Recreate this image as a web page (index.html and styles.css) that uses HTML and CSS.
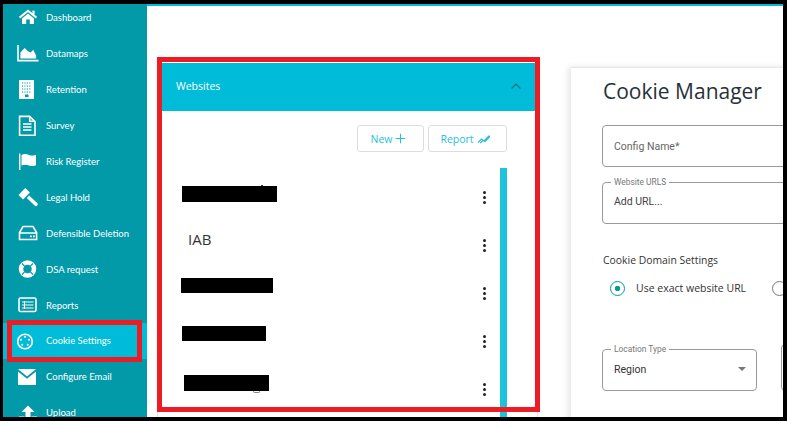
FILE: index.html
```html
<!DOCTYPE html>
<html lang="en">
<head>
<meta charset="utf-8">
<title>Cookie Settings</title>
<link rel="stylesheet" href="styles.css">
</head>
<body>
<div class="app">
  <nav class="sidebar">
    <a class="nav-item"><svg class="nav-icon" viewBox="0 0 22 22"><path class="fill" d="M5 11.500 11 6.600l6 4.900V17h-4.200v-4.600H9.200V17H5z"/><path class="line thick" d="M2.600 10.600 11 3.800l8.400 6.800"/><path class="fill" d="M15.400 3.600h2.200v4h-2.200z"/></svg><span>Dashboard</span></a>
    <a class="nav-item"><svg class="nav-icon" viewBox="0 0 22 22"><path class="line" d="M1 2v15.600h20.500"/><path class="fill" d="M3.400 15.400V9.600L7.600 5l3.400 3.200 2.600 1.400 2.600-2.800 2.900 5.600v3z"/></svg><span>Datamaps</span></a>
    <a class="nav-item"><svg class="nav-icon" viewBox="0 0 22 22"><path class="fill" d="M2 1h15v19H2z"/><path class="dots" d="M5 4h9M5 7h9M5 10h9M5 13h9"/><path class="cut" d="M8 15.500h3.500V18H8z"/></svg><span>Retention</span></a>
    <a class="nav-item"><svg class="nav-icon" viewBox="0 0 22 22"><path class="line" d="M2.600 1.400h10l5.400 5.200v13.600H2.600z"/><path class="fill" d="M12 1.400h1.500v4.100h4.500V7h-6z"/><path class="line" d="M6 9h8.500M6 12h8.500M6 15h8.500"/></svg><span>Survey</span></a>
    <a class="nav-item"><svg class="nav-icon" viewBox="0 0 22 22"><path class="fill" d="M2 2.500h1.400V19H2z"/><path class="fill" d="M4.500 4c3-1.600 5.500-.8 7.500 0 2.500 1 4.500.6 7-.3v10.500c-2.500 1-5 1.200-7 .3-2.400-1-4.500-1.300-7.500 0z"/></svg><span>Risk Register</span></a>
    <a class="nav-item"><svg class="nav-icon" viewBox="0 0 22 22"><path class="fill" d="m1.500 9 6.800-7 4.600 4.600-6.800 7z"/><path class="fill" d="m9.800 12 2.400-2.400 8 7.300a1.800 1.800 0 0 1-2.600 2.600z"/></svg><span>Legal Hold</span></a>
    <a class="nav-item"><svg class="nav-icon" viewBox="0 0 22 22"><path class="line" d="M6 4.500h10l3.600 6v7H2.500v-7zM2.500 11h17"/><path class="fill" d="M13 13.500h1.800v1.800H13zM16 13.500h1.800v1.800H16z"/></svg><span>Defensible Deletion</span></a>
    <a class="nav-item"><svg class="nav-icon" viewBox="0 0 22 22"><circle class="ring" cx="10.500" cy="11" r="6.500"/><path class="spoke" d="m5 5.500 2.600 2.600M16 5.500l-2.600 2.600M5 16.500l2.600-2.600M16 16.500l-2.600-2.600"/></svg><span>DSA request</span></a>
    <a class="nav-item"><svg class="nav-icon" viewBox="0 0 22 22"><rect class="line" x="2" y="4" width="17" height="13.500" rx="1.500"/><path class="line thin" d="M5 8h11.500M5 11h11.500M5 14h11.500M7.500 7v8"/></svg><span>Reports</span></a>
    <a class="nav-item active"><svg class="nav-icon" viewBox="0 0 22 22"><circle class="line" cx="8" cy="11.500" r="7.300"/><circle class="fill" cx="8" cy="6.800" r="1"/><circle class="fill" cx="4" cy="9.800" r="1"/><circle class="fill" cx="12" cy="9.800" r="1"/><circle class="fill" cx="5.200" cy="14.800" r="1"/><circle class="fill" cx="10.800" cy="14.800" r="1"/></svg><span>Cookie Settings</span></a>
    <a class="nav-item"><svg class="nav-icon" viewBox="0 0 22 22"><path class="fill" d="M1 3h18L10 10.400z"/><path class="fill" d="M1 5.400 10 12.800l9-7.400V19H1z"/></svg><span>Configure Email</span></a>
    <a class="nav-item"><svg class="nav-icon" viewBox="0 0 22 22"><path class="fill" d="M11 3.500 17.500 10h-4v5.500h-5V10h-4z"/><path class="fill" d="M2 14.500h5.500v2.500h7v-2.500H20V21H2z"/></svg><span>Upload</span></a>
  </nav>
  <main class="content">
    <section class="websites">
      <header class="panel-head"><span>Websites</span><svg class="chevron" viewBox="0 0 12 8"><path d="m1.500 6.500 4.500-4.500 4.500 4.500"/></svg></header>
      <div class="actions">
        <button class="btn new">New <svg class="btn-icon" viewBox="0 0 12 12"><path d="M6 .8v10.400M.8 6h10.400"/></svg></button>
        <button class="btn report">Report <svg class="btn-icon wide" viewBox="0 0 14 10"><path d="m1 8.500 3.500-3.500 2.500 2 5.500-5.500M3 9l3-2.500 2 1 5-5"/></svg></button>
      </div>
      <div class="list-wrap">
        <ul class="site-list">
          <li class="site"><span class="redact r1"></span><span class="kebab"><i></i><i></i><i></i></span></li>
          <li class="site"><span class="site-name">IAB</span><span class="kebab"><i></i><i></i><i></i></span></li>
          <li class="site"><span class="redact r3"></span><span class="kebab"><i></i><i></i><i></i></span></li>
          <li class="site"><span class="redact r4"></span><span class="kebab"><i></i><i></i><i></i></span></li>
          <li class="site"><span class="redact r5"></span><span class="kebab"><i></i><i></i><i></i></span></li>
        </ul>
        <div class="scroll-thumb"></div>
      </div>
      <div class="mark-panel"></div>
    </section>
    <section class="manager">
      <h1 class="title">Cookie Manager</h1>
      <div class="field"><span class="placeholder">Config Name*</span></div>
      <fieldset class="field legend-field"><legend>Website URLS</legend><span class="value muted">Add URL...</span></fieldset>
      <p class="group-label">Cookie Domain Settings</p>
      <div class="radios">
        <span class="radio on"></span><span class="radio-label">Use exact website URL</span>
        <span class="radio"></span>
      </div>
      <div class="select-row">
        <fieldset class="field legend-field select"><legend>Location Type</legend><span class="value">Region</span><span class="caret"></span></fieldset>
        <fieldset class="field legend-field select"></fieldset>
      </div>
    </section>
  </main>
</div>
</body>
</html>
```
FILE: styles.css
```css
*, *::before, *::after { box-sizing: border-box; }
html, body { margin: 0; height: 100%; background: #000; overflow: hidden; }
body { padding: 4px 4px 4px 3px; }

.app { display: flex; height: 413px; overflow: hidden; background: #fff; }

.sidebar { flex: 0 0 144px; background: #0299a9; overflow: hidden; }
.nav-item { display: flex; align-items: center; gap: 7px; height: 35.9px; padding-left: 14px; color: #fff; font: 400 9.5px Lato, sans-serif; position: relative; }
.nav-item:first-child { margin-top: -4px; }
.nav-item.active { background: #00bcd8; }
.nav-item.active::after { content: ""; position: absolute; left: 4px; top: -3px; width: 135px; height: 42px; border: 5px solid #ed1c24; }
.nav-icon { flex: 0 0 22px; width: 22px; height: 22px; }
.fill { fill: #fff; }
.line { fill: none; stroke: #fff; stroke-width: 1.6; }
.line.thick { stroke-width: 2; }
.line.thin { stroke-width: 1; }
.dots { fill: none; stroke: #0299a9; stroke-width: 1.2; stroke-dasharray: 1.2 1.2; }
.cut { fill: #0299a9; }
.ring { fill: none; stroke: #fff; stroke-width: 4.5; }
.spoke { fill: none; stroke: #0299a9; stroke-width: 1.2; }

.content { flex: 1; min-width: 0; border-top: 2px solid #00bcd8; display: flex; align-items: flex-start; gap: 33px; padding: 56px 0 0 10px; overflow: hidden; }

.websites { flex: 0 0 381px; position: relative; height: 400px; border: 1px solid #e6e6e6; border-top-color: #fff; }
.panel-head { display: flex; justify-content: space-between; align-items: center; height: 48px; padding: 0 15px 3px 18px; background: #00bcd8; color: #fff; font: 400 10.5px "Open Sans", sans-serif; }
.chevron { width: 12px; height: 8px; }
.chevron path { fill: none; stroke: #1b6f80; stroke-width: 1.1; }
.actions { display: flex; justify-content: flex-end; gap: 4px; padding: 14px 30px 0 0; }
.btn { display: flex; align-items: center; justify-content: center; gap: 3px; height: 27px; background: #fff; border: 1px solid #ddd; border-radius: 3px; padding: 0 4px 0 0; color: #27bfdc; font: 400 10.5px "Open Sans", sans-serif; }
.btn.new { width: 67px; }
.btn.report { width: 79px; }
.btn-icon { width: 11px; height: 11px; }
.btn-icon.wide { width: 14px; height: 10px; }
.btn-icon path { fill: none; stroke: #27bfdc; stroke-width: 1.1; }
.list-wrap { position: relative; height: 250px; margin-top: 16px; }
.site-list { list-style: none; margin: 0; padding: 5px 0 0; }
.site { display: flex; align-items: center; justify-content: space-between; height: 48px; padding-right: 51px; position: relative; }
.site-name { padding-left: 30px; margin-top: -12px; font: 400 15px "Open Sans", sans-serif; color: #333; }
.kebab { display: flex; flex-direction: column; gap: 2px; margin-left: auto; }
.kebab i { display: block; width: 3px; height: 3px; border-radius: 50%; background: #222; }
.redact { display: block; position: relative; height: 16px; background: #000; }
.r1 { width: 95px; margin: -6px 0 0 24px; }
.r1::after { content: ""; position: absolute; right: 14px; top: -1px; width: 2px; height: 1px; background: #333; }
.r3 { width: 92px; height: 15px; margin: -16px 0 0 23px; }
.r4 { width: 84px; height: 15px; margin: -16px 0 0 24px; }
.r5 { width: 85px; margin: -12px 0 0 26px; }
.r5::after { content: ""; position: absolute; right: 9px; bottom: -2px; width: 7px; height: 2px; border: 1px solid #7d8794; border-top: 0; border-radius: 0 0 3px 3px; }
.scroll-thumb { position: absolute; right: 30px; top: 0; bottom: 0; width: 7px; background: #1cc3dc; }
.mark-panel { position: absolute; left: -1px; top: -6px; width: 383px; height: 355px; border: 5px solid #ed1c24; }

.manager { flex: 0 0 240px; height: 400px; margin-top: 5px; padding: 0 0 0 31px; border-top: 1px solid #e6e6e6; box-shadow: -3px 0 6px rgba(0, 0, 0, .1); font-family: Roboto, sans-serif; }
.title { margin: 9px 0 20px 1px; font: 400 21px/28px "Open Sans", sans-serif; color: #263238; }
.field { display: block; margin: 0; width: 260px; height: 42px; padding: 0 11px; border: 1px solid #999; border-radius: 4px; font-size: 10.5px; }
.placeholder { display: block; line-height: 42px; color: #666; }
.legend-field { position: relative; margin-top: 10px; height: 47px; padding: 0 11px; }
.legend-field legend { padding: 0 3px; margin-left: -3px; font-size: 8.4px; line-height: 10px; color: #777; }
.value { display: block; margin-top: 5px; line-height: 20px; color: #333; }
.muted { color: #444; }
.group-label { margin: 28px 0 0 1px; font: 400 10.4px/16px "Open Sans", sans-serif; color: #333; }
.radios { display: flex; align-items: center; margin-top: 12px; padding-left: 8px; font: 400 10.5px/16px "Open Sans", sans-serif; color: #333; white-space: nowrap; }
.radio { flex: none; width: 15px; height: 15px; border: 1.5px solid #777; border-radius: 50%; }
.radio.on { border-color: #0299a9; background: radial-gradient(circle, #0299a9 0 2.5px, #fff 3px); }
.radio-label { margin: 0 26px 0 11px; }
.select-row { display: flex; gap: 24px; margin-top: 48px; }
.select { flex: 0 0 155px; width: 155px; margin-top: 0; }
.select .value { margin-top: 6px; }
.caret { position: absolute; right: 10px; top: 13px; border: 4px solid transparent; border-top: 4px solid #777; border-bottom: 0; }
```
